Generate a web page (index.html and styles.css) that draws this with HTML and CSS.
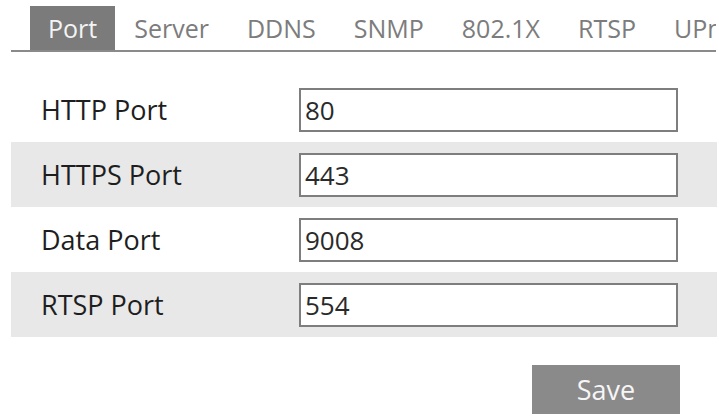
FILE: index.html
```html
<!DOCTYPE html>
<html>
<head>
<meta charset="utf-8">
<link rel="stylesheet" href="styles.css">
</head>
<body>
<div class="page">
  <nav class="tabs">
    <span class="tab active">Port</span>
    <span class="tab">Server</span>
    <span class="tab">DDNS</span>
    <span class="tab">SNMP</span>
    <span class="tab">802.1X</span>
    <span class="tab">RTSP</span>
    <span class="tab">UPnP</span>
  </nav>
  <div class="form">
    <div class="row">
      <span class="label">HTTP Port</span>
      <input class="field" type="text" value="80">
    </div>
    <div class="row alt">
      <span class="label">HTTPS Port</span>
      <input class="field" type="text" value="443">
    </div>
    <div class="row">
      <span class="label">Data Port</span>
      <input class="field" type="text" value="9008">
    </div>
    <div class="row alt">
      <span class="label">RTSP Port</span>
      <input class="field" type="text" value="554">
    </div>
  </div>
  <div class="actions">
    <button class="save" type="button">Save</button>
  </div>
</div>
</body>
</html>
```

FILE: styles.css
```css
html, body {
  margin: 0;
  padding: 0;
  background: #ffffff;
  overflow: hidden;
}
.page {
  width: 719px;
  height: 419px;
  padding-top: 6px;
  box-sizing: border-box;
  font-family: "Open Sans", "Noto Sans", sans-serif;
}
.tabs {
  display: flex;
  margin-left: 11px;
  margin-right: 3px;
  padding-left: 19px;
  border-bottom: 2px solid #8a8a8a;
  white-space: nowrap;
  overflow: hidden;
}
.tab {
  flex: none;
  height: 44px;
  line-height: 44px;
  padding: 0 19px;
  font-size: 25px;
  color: #7c7c7c;
}
.tab.active {
  padding: 0 18px;
  background: #7b7b7b;
  color: #f4f4f4;
}
.form {
  margin: 25px 2px 0 11px;
}
.row {
  display: flex;
  align-items: center;
  height: 65px;
  padding-left: 30px;
}
.row.alt {
  background: #e8e8e8;
}
.label {
  width: 258px;
  font-size: 27px;
  color: #1e1e1e;
}
.field {
  box-sizing: border-box;
  width: 379px;
  height: 44px;
  margin: 0;
  padding: 0 4px;
  border: 2px solid #7e7e7e;
  background: #ffffff;
  font-family: "Open Sans", "Noto Sans", sans-serif;
  font-size: 26px;
  color: #2a2a2a;
  outline: none;
}
.actions {
  display: flex;
  justify-content: flex-end;
  padding-right: 39px;
  margin-top: 28px;
}
.save {
  width: 148px;
  height: 49px;
  border: none;
  margin: 0;
  padding: 0;
  background: #8a8a8a;
  color: #f6f6f6;
  font-family: "Open Sans", "Noto Sans", sans-serif;
  font-size: 27px;
}
```
